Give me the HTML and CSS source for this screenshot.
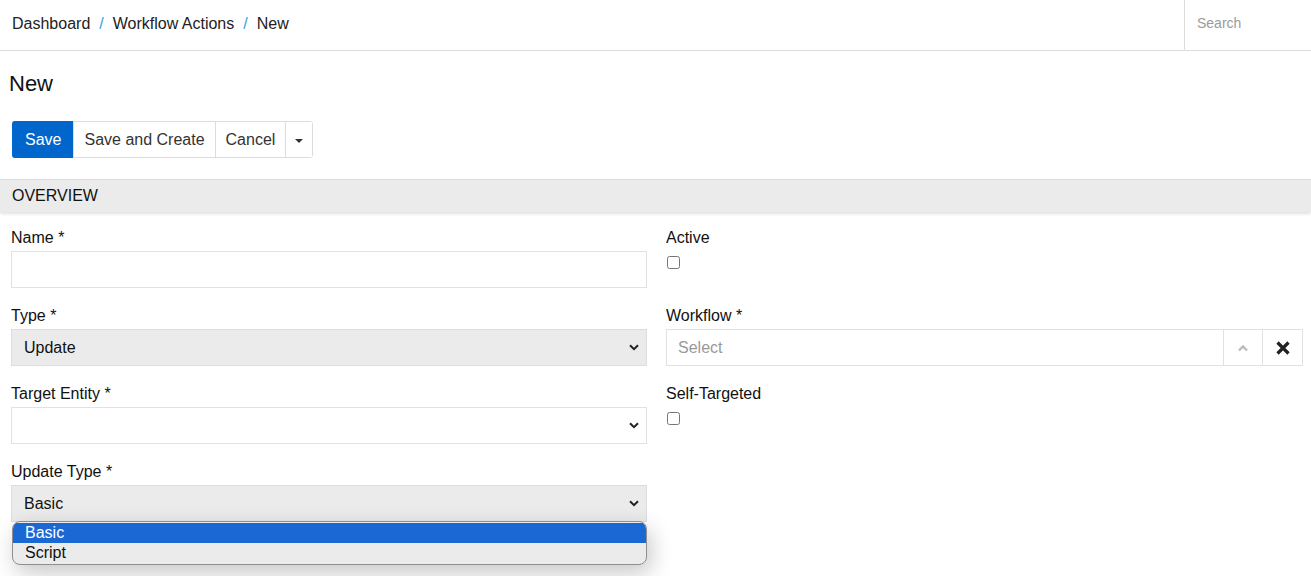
FILE: index.html
```html
<!DOCTYPE html>
<html>
<head>
<meta charset="utf-8">
<link rel="stylesheet" href="styles.css">
</head>
<body>
<header class="topbar">
  <nav class="crumbs">
    <a class="crumb">Dashboard</a><span class="sep">/</span><a class="crumb">Workflow Actions</a><span class="sep">/</span><span class="crumb">New</span>
  </nav>
  <div class="search"><input class="search-input" type="text" placeholder="Search"></div>
</header>

<h1 class="title">New</h1>

<div class="btn-group">
  <button class="btn btn-primary">Save</button>
  <button class="btn">Save and Create</button>
  <button class="btn">Cancel</button>
  <button class="btn btn-caret"><span class="caret"></span></button>
</div>

<div class="section-head">OVERVIEW</div>

<form class="form-grid">
  <div class="col">
    <div class="field">
      <label class="label">Name *</label>
      <input class="input" type="text">
    </div>
    <div class="field">
      <label class="label">Type *</label>
      <div class="select-wrap">
        <select class="select filled"><option>Update</option></select>
        <svg class="chev" width="10" height="7" viewBox="0 0 10 7"><path d="M1 1.2 L5 5.2 L9 1.2" fill="none" stroke="#222" stroke-width="2"/></svg>
      </div>
    </div>
    <div class="field">
      <label class="label">Target Entity *</label>
      <div class="select-wrap">
        <select class="select"><option></option></select>
        <svg class="chev" width="10" height="7" viewBox="0 0 10 7"><path d="M1 1.2 L5 5.2 L9 1.2" fill="none" stroke="#222" stroke-width="2"/></svg>
      </div>
    </div>
    <div class="field">
      <label class="label">Update Type *</label>
      <div class="select-wrap">
        <select class="select filled"><option>Basic</option><option>Script</option></select>
        <svg class="chev" width="10" height="7" viewBox="0 0 10 7"><path d="M1 1.2 L5 5.2 L9 1.2" fill="none" stroke="#222" stroke-width="2"/></svg>
        <ul class="dropdown">
          <li class="opt active">Basic</li>
          <li class="opt">Script</li>
        </ul>
      </div>
    </div>
  </div>
  <div class="col">
    <div class="field check-field">
      <label class="label">Active</label>
      <input class="check" type="checkbox">
    </div>
    <div class="field">
      <label class="label">Workflow *</label>
      <div class="combo">
        <input class="combo-input" type="text" placeholder="Select">
        <span class="combo-btn up"><svg width="12" height="8" viewBox="0 0 12 8"><path d="M2 6.5 L6 2.5 L10 6.5" fill="none" stroke="#bbb" stroke-width="2.4"/></svg></span>
        <span class="combo-btn clear"><svg width="14" height="14" viewBox="0 0 14 14"><path d="M1.5 1.5 L12.5 12.5 M12.5 1.5 L1.5 12.5" fill="none" stroke="#222" stroke-width="3.2"/></svg></span>
      </div>
    </div>
    <div class="field check-field">
      <label class="label">Self-Targeted</label>
      <input class="check" type="checkbox">
    </div>
  </div>
</form>
</body>
</html>
```
FILE: styles.css
```css
* { box-sizing: border-box; }
html, body { margin: 0; padding: 0; background: #fff; }
body {
  font-family: "Liberation Sans", Arial, sans-serif;
  font-size: 16px;
  color: #222;
  overflow: hidden;
  height: 576px;
}
.topbar {
  height: 51px;
  border-bottom: 1px solid #dcdcdc;
  display: flex;
  align-items: stretch;
  justify-content: space-between;
}
.crumbs {
  display: flex;
  align-items: center;
  padding-left: 12px;
  padding-bottom: 2px;
}
.crumb { color: #222; text-decoration: none; }
.sep { color: #3a9ee4; padding: 0 9px; }
.search {
  width: 127px;
  border-left: 1px solid #dcdcdc;
  display: flex;
  align-items: center;
  padding-bottom: 5px;
}
.search-input {
  border: 0;
  outline: none;
  width: 100%;
  padding: 0 12px;
  font-family: inherit;
  font-size: 14px;
  background: transparent;
}
.search-input::placeholder { color: #9a9a9a; }
.title {
  font-size: 22px;
  font-weight: normal;
  margin: 22px 0 0 9px;
  line-height: 22px;
  color: #111;
}
.btn-group {
  display: inline-flex;
  margin: 26px 0 0 12px;
  border: 1px solid #dcdcdc;
  border-radius: 3px;
  height: 37px;
}
.btn {
  font-family: inherit;
  font-size: 16px;
  color: #333;
  background: #fff;
  border: 0;
  border-left: 1px solid #dcdcdc;
  padding: 1px 10px 0;
  height: 100%;
}
.btn:first-child { border-left: 0; }
.btn-primary {
  background: #0066cc;
  color: #fff;
  margin: -1px 0 -1px -1px;
  height: calc(100% + 2px);
  border-radius: 3px 0 0 3px;
  padding: 1px 12px 0 13px;
}
.btn-caret { padding: 0 9px; display: flex; align-items: center; }
.caret {
  display: block;
  width: 0; height: 0;
  border-left: 4px solid transparent;
  border-right: 4px solid transparent;
  border-top: 4px solid #333;
  margin-top: 2px;
}
.section-head {
  margin-top: 21px;
  height: 33px;
  background: #ebebeb;
  border-top: 1px solid #dcdcdc;
  box-shadow: 0 2px 3px rgba(0,0,0,0.12);
  padding-left: 12px;
  display: flex;
  align-items: center;
  color: #111;
}
.form-grid {
  display: grid;
  grid-template-columns: 636px 1fr;
  column-gap: 19px;
  padding: 16px 8px 0 11px;
}
.field { margin-bottom: 18px; }
.label {
  display: block;
  line-height: 20px;
  margin-bottom: 3px;
  color: #111;
}
.input {
  display: block;
  width: 100%;
  height: 37px;
  border: 1px solid #e2e2e2;
  font-family: inherit;
  font-size: 16px;
  padding: 0 12px;
  outline: none;
}
.select-wrap { position: relative; }
.select {
  display: block;
  width: 100%;
  height: 37px;
  appearance: none;
  -webkit-appearance: none;
  border: 1px solid #e2e2e2;
  background: #fff;
  font-family: inherit;
  font-size: 16px;
  color: #111;
  padding: 0 12px;
  outline: none;
  border-radius: 0;
}
.select.filled { background: #ebebeb; border-color: #dddddd; }
.chev {
  position: absolute;
  right: 8px;
  top: 15px;
  pointer-events: none;
}
.dropdown {
  position: absolute;
  left: 1px;
  right: 0;
  top: 36px;
  margin: 0;
  padding: 1px 0;
  list-style: none;
  background: #ebebeb;
  border: 1px solid #8f8f8f;
  border-radius: 8px;
  overflow: hidden;
  box-shadow: 4px 8px 22px rgba(0,0,0,0.22);
  z-index: 5;
}
.opt {
  height: 20px;
  line-height: 20px;
  padding-left: 12px;
  color: #111;
}
.opt.active { background: #1b67d3; color: #fff; }
.check-field .label { margin-bottom: 8px; }
.check {
  display: block;
  margin: 0 0 0 1px;
  width: 13px;
  height: 13px;
}
.check-field { margin-bottom: 37px; }
.combo {
  display: flex;
  height: 37px;
  border: 1px solid #e2e2e2;
}
.combo-input {
  flex: 1;
  border: 0;
  outline: none;
  font-family: inherit;
  font-size: 16px;
  padding: 0 11px;
  min-width: 0;
}
.combo-input::placeholder { color: #9a9a9a; }
.combo-btn {
  display: flex;
  align-items: center;
  justify-content: center;
  border-left: 1px solid #e2e2e2;
}
.combo-btn.up { width: 39px; }
.combo-btn.clear { width: 40px; }
```
